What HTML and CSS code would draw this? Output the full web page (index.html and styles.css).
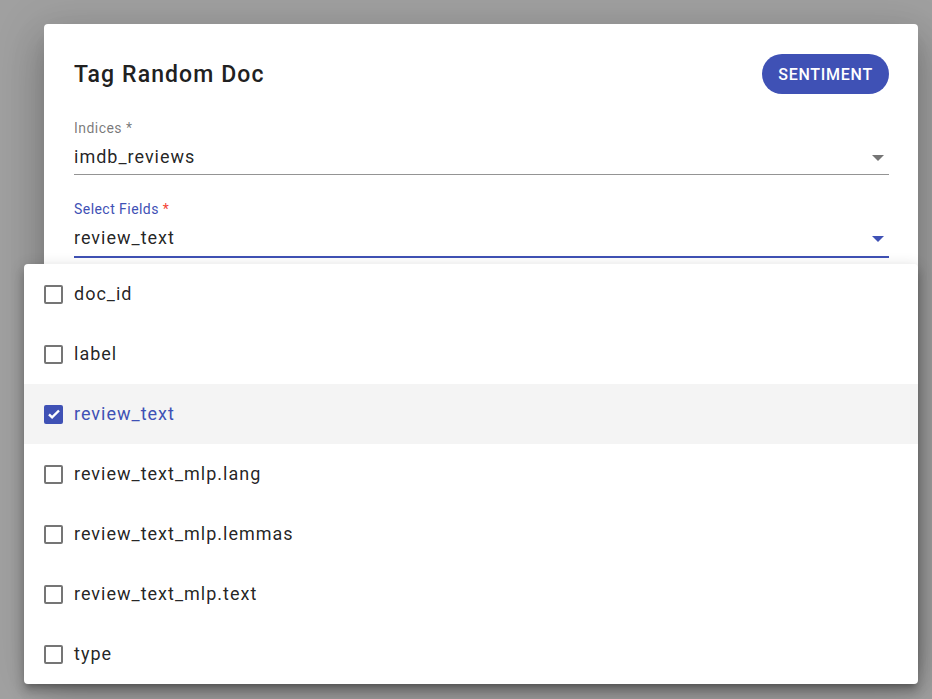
FILE: index.html
```html
<!DOCTYPE html>
<html lang="en">
<head>
<meta charset="utf-8">
<title>Tag Random Doc</title>
<link rel="stylesheet" href="styles.css">
</head>
<body>
<div class="dialog">
  <div class="header">
    <h2 class="title">Tag Random Doc</h2>
    <button class="chip">SENTIMENT</button>
  </div>
  <div class="field">
    <div class="label">Indices *</div>
    <div class="input">
      <span class="value">imdb_reviews</span>
      <span class="arrow"></span>
    </div>
  </div>
  <div class="field focused">
    <div class="label">Select Fields <span class="req">*</span></div>
    <div class="input">
      <span class="value">review_text</span>
      <span class="arrow"></span>
    </div>
  </div>
</div>

<ul class="menu">
  <li class="item"><span class="box"></span><span class="text">doc_id</span></li>
  <li class="item"><span class="box"></span><span class="text">label</span></li>
  <li class="item selected"><span class="box checked"><svg viewBox="0 0 18 18" width="18" height="18"><path d="M4 9.3l3.1 3.1L14 5.5" fill="none" stroke="#fff" stroke-width="2.4"/></svg></span><span class="text">review_text</span></li>
  <li class="item"><span class="box"></span><span class="text">review_text_mlp.lang</span></li>
  <li class="item"><span class="box"></span><span class="text">review_text_mlp.lemmas</span></li>
  <li class="item"><span class="box"></span><span class="text">review_text_mlp.text</span></li>
  <li class="item"><span class="box"></span><span class="text">type</span></li>
</ul>
</body>
</html>
```

FILE: styles.css
```css
html, body {
  margin: 0;
  padding: 0;
  height: 100%;
  overflow: hidden;
}
body {
  background: #a0a0a0;
  font-family: Roboto, "Noto Sans", Arial, sans-serif;
  color: rgba(0, 0, 0, 0.87);
}
.dialog {
  margin: 24px 14px 0 44px;
  height: 640px;
  background: #fff;
  border-radius: 4px;
  box-shadow: 0 11px 15px -7px rgba(0,0,0,0.2), 0 24px 38px 3px rgba(0,0,0,0.14), 0 9px 46px 8px rgba(0,0,0,0.12);
  padding: 30px 29px 0 30px;
  box-sizing: border-box;
}
.header {
  display: flex;
  align-items: center;
  justify-content: space-between;
  height: 40px;
}
.title {
  margin: 0;
  font-size: 23px;
  font-weight: 500;
  color: #212121;
  letter-spacing: 1.1px;
}
.chip {
  height: 40px;
  padding: 0 16px;
  border: none;
  border-radius: 20px;
  background: #3f51b5;
  color: #fff;
  font-family: Roboto, Arial, sans-serif;
  font-size: 16px;
  font-weight: 500;
  letter-spacing: 0.75px;
}
.field {
  margin-top: 26px;
}
.label {
  font-size: 14px;
  line-height: 16px;
  letter-spacing: 0.45px;
  color: rgba(0, 0, 0, 0.54);
}
.input {
  margin-top: 9px;
  display: flex;
  align-items: center;
  justify-content: space-between;
  height: 24px;
  padding-bottom: 5px;
  border-bottom: 1px solid #949494;
}
.value {
  font-size: 18px;
  line-height: 24px;
  letter-spacing: 1px;
  color: rgba(0, 0, 0, 0.87);
}
.arrow {
  width: 0;
  height: 0;
  margin-right: 5px;
  margin-top: 2px;
  border-left: 6px solid transparent;
  border-right: 6px solid transparent;
  border-top: 6px solid #757575;
}
.focused .label {
  color: #3f51b5;
}
.req {
  color: #f44336;
}
.focused .input {
  padding-bottom: 6px;
  border-bottom: 2px solid #3f51b5;
}
.focused .arrow {
  border-top-color: #3f51b5;
}
.menu {
  position: absolute;
  left: 24px;
  top: 264px;
  width: 894px;
  margin: 0;
  padding: 0;
  list-style: none;
  background: #fff;
  border-radius: 4px;
  box-shadow: 0 5px 5px -3px rgba(0,0,0,0.2), 0 8px 10px 1px rgba(0,0,0,0.14), 0 3px 14px 2px rgba(0,0,0,0.12);
  overflow: hidden;
}
.item {
  display: flex;
  align-items: center;
  height: 60px;
  padding-left: 20px;
}
.item.selected {
  background: #f4f4f4;
}
.box {
  width: 19px;
  height: 19px;
  box-sizing: border-box;
  border: 2.5px solid #757575;
  border-radius: 2px;
  display: flex;
  align-items: center;
  justify-content: center;
}
.box.checked {
  border: none;
  background: #3f51b5;
}
.box svg {
  display: block;
}
.text {
  margin-left: 11px;
  font-size: 18px;
  line-height: 24px;
  letter-spacing: 1px;
  color: rgba(0, 0, 0, 0.87);
}
.selected .text {
  color: #3f51b5;
}
```
